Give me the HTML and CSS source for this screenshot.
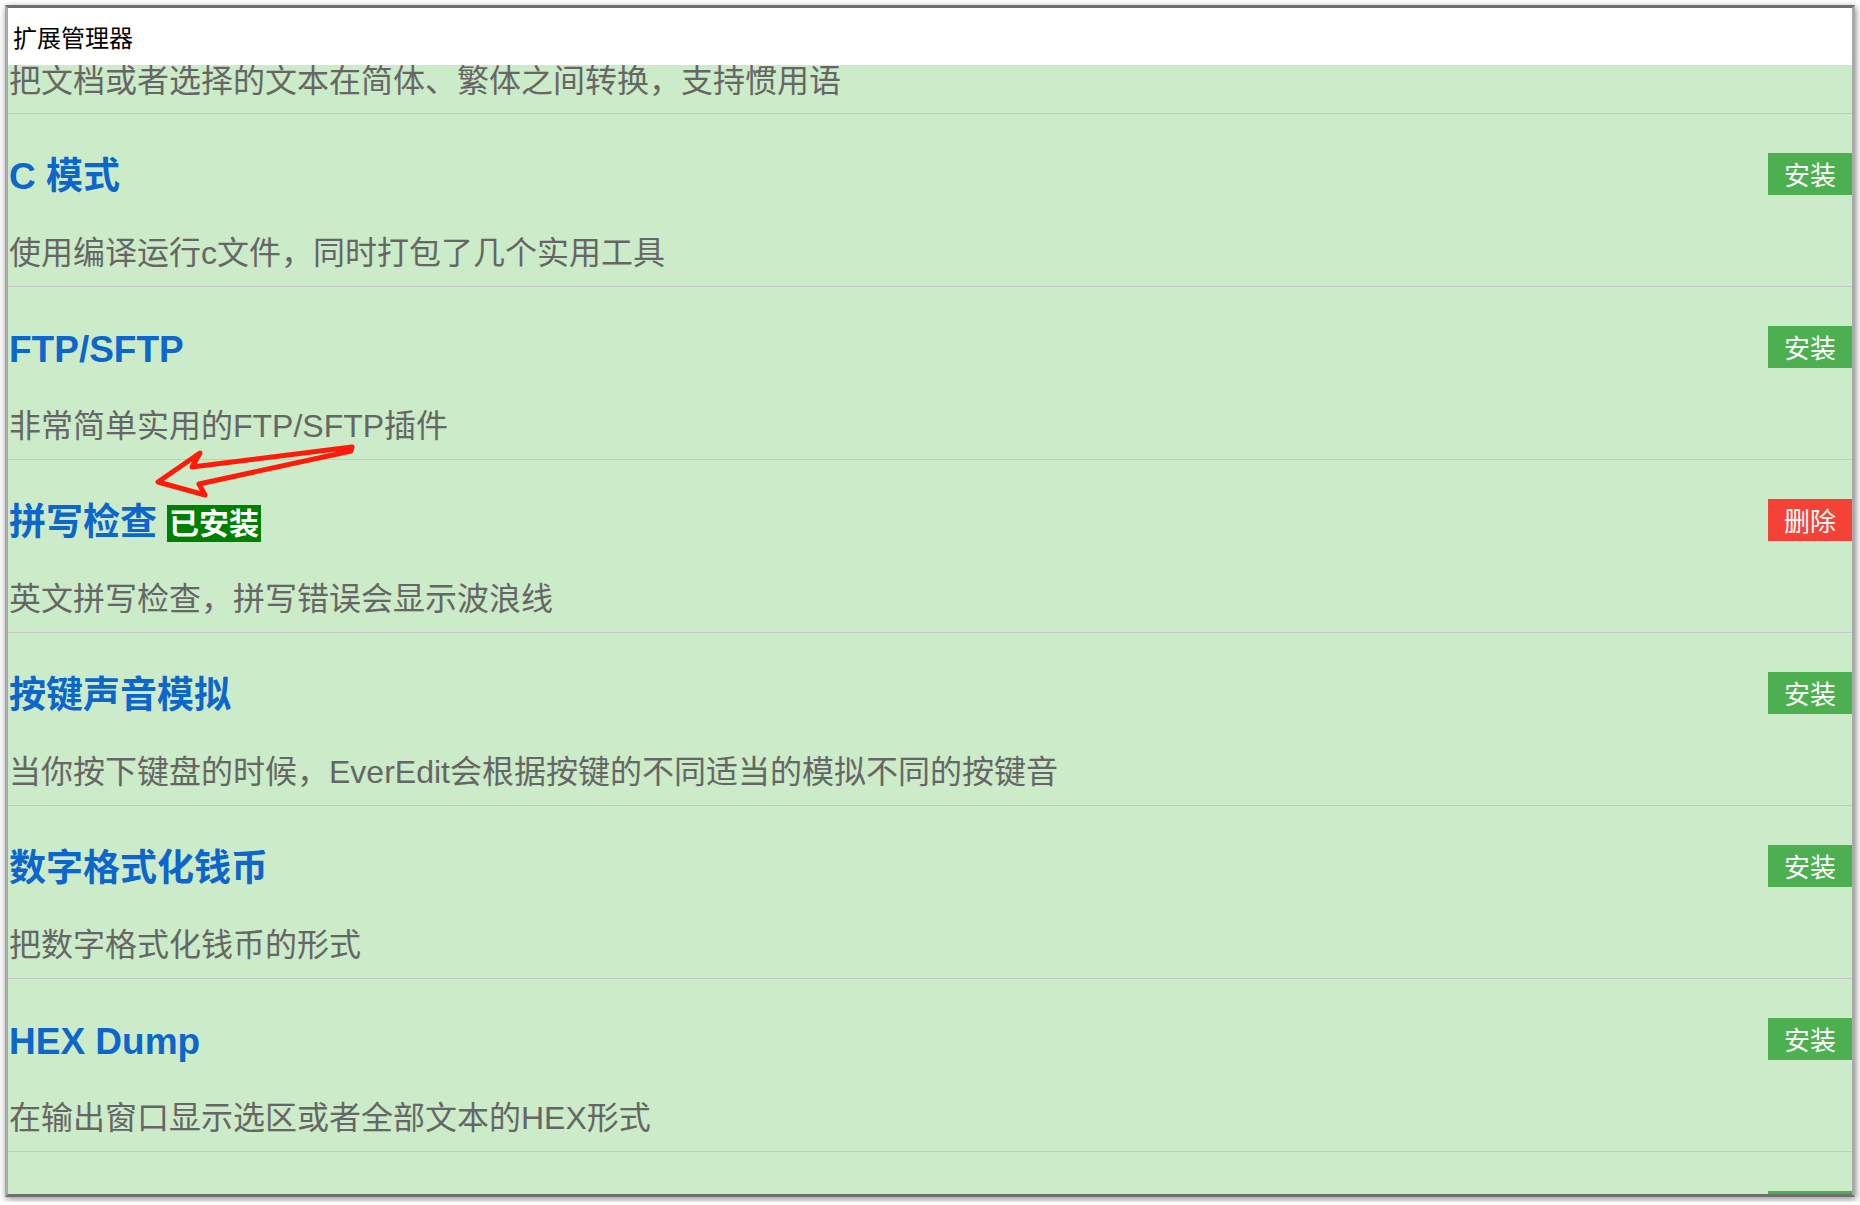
FILE: index.html
```html
<!DOCTYPE html>
<html>
<head>
  <meta charset="UTF-8">
  <title>扩展管理器</title>
  <link rel="stylesheet" href="styles.css">
</head>
<body>
  <div class="window">
    <div class="titlebar">扩展管理器</div>
    <div class="list">
      <!-- primera entrada, ya desplazada fuera de la vista -->
      <div class="item partial">
        <p class="desc">把文档或者选择的文本在简体、繁体之间转换，支持惯用语</p>
      </div>
      <div class="item">
        <div class="head">
          <h2 class="name">C 模式</h2>
          <button class="btn install">安装</button>
        </div>
        <p class="desc">使用编译运行c文件，同时打包了几个实用工具</p>
      </div>
      <div class="item">
        <div class="head">
          <h2 class="name">FTP/SFTP</h2>
          <button class="btn install">安装</button>
        </div>
        <p class="desc">非常简单实用的FTP/SFTP插件</p>
      </div>
      <div class="item">
        <div class="head">
          <h2 class="name">拼写检查 <span class="badge">已安装</span></h2>
          <button class="btn remove">删除</button>
        </div>
        <p class="desc">英文拼写检查，拼写错误会显示波浪线</p>
      </div>
      <div class="item">
        <div class="head">
          <h2 class="name">按键声音模拟</h2>
          <button class="btn install">安装</button>
        </div>
        <p class="desc">当你按下键盘的时候，EverEdit会根据按键的不同适当的模拟不同的按键音</p>
      </div>
      <div class="item">
        <div class="head">
          <h2 class="name">数字格式化钱币</h2>
          <button class="btn install">安装</button>
        </div>
        <p class="desc">把数字格式化钱币的形式</p>
      </div>
      <div class="item">
        <div class="head">
          <h2 class="name">HEX Dump</h2>
          <button class="btn install">安装</button>
        </div>
        <p class="desc">在输出窗口显示选区或者全部文本的HEX形式</p>
      </div>
      <div class="item">
        <div class="head">
          <h2 class="name">Markdown 预览</h2>
          <button class="btn install">安装</button>
        </div>
        <p class="desc">实时预览Markdown文档</p>
      </div>
    </div>
  </div>

  <!-- flecha roja de anotación -->
  <svg class="annot" width="1860" height="1205" viewBox="0 0 1860 1205">
    <path d="M352 447 L192 467 L200 453 L158 482 L205 495 L199 484 L351 451 Z"
          fill="none" stroke="#ff1a0a" stroke-width="5" stroke-linejoin="round" stroke-linecap="round"/>
  </svg>
</body>
</html>
```

FILE: styles.css
```css
:root {
  --bg-green: #ccebc8;
  --title-blue: #0d66cc;
  --desc-gray: #666666;
  --btn-green: #4caf50;
  --btn-red: #f44336;
  --divider: #c8c8c8;
}
body {
  margin: 0;
  padding: 5px;
  background: #ffffff;
  font-family: "Liberation Sans", "Noto Sans CJK SC", sans-serif;
}
.window {
  box-sizing: border-box;
  width: 1850px;
  height: 1192px;
  display: flex;
  flex-direction: column;
  border-top: 3px solid #6f6f6f;
  border-bottom: 3px solid #6f6f6f;
  border-left: 3px solid #aaaaaa;
  border-right: 3px solid #aaaaaa;
  box-shadow: 1px 2px 7px rgba(0, 0, 0, 0.45);
}
.titlebar {
  height: 57px;
  flex: none;
  display: flex;
  align-items: center;
  padding-left: 5px;
  background: #ffffff;
  color: #000000;
  font-size: 24px;
}
.list {
  flex: 1;
  overflow: hidden;
  background: var(--bg-green);
}
.item {
  padding: 39px 0 15px 1px;
  border-bottom: 1px solid var(--divider);
}
.item.partial {
  padding-top: 0;
  padding-bottom: 14px;
}
.item.partial .desc {
  margin-top: -2px;
}
.head {
  height: 42px;
  display: flex;
  align-items: center;
  justify-content: space-between;
}
.name {
  margin: 0;
  padding-top: 6px;
  display: flex;
  align-items: center;
  gap: 10px;
  font-size: 37px;
  line-height: 42px;
  font-weight: bold;
  color: var(--title-blue);
}
.badge {
  display: inline-block;
  padding: 0 2px;
  background: #008000;
  color: #ffffff;
  font-size: 30px;
  line-height: 37px;
  font-weight: bold;
}
.desc {
  margin: 40px 0 0;
  font-size: 32px;
  line-height: 36px;
  color: var(--desc-gray);
}
.btn {
  height: 42px;
  padding: 0 16px;
  border: none;
  border-radius: 0;
  color: #ffffff;
  font-family: "Noto Sans CJK SC", sans-serif;
  font-size: 26px;
  line-height: 42px;
  cursor: pointer;
}
.btn.install {
  background: var(--btn-green);
}
.btn.remove {
  background: var(--btn-red);
}
.annot {
  position: absolute;
  top: 0;
  left: 0;
  pointer-events: none;
}
```
